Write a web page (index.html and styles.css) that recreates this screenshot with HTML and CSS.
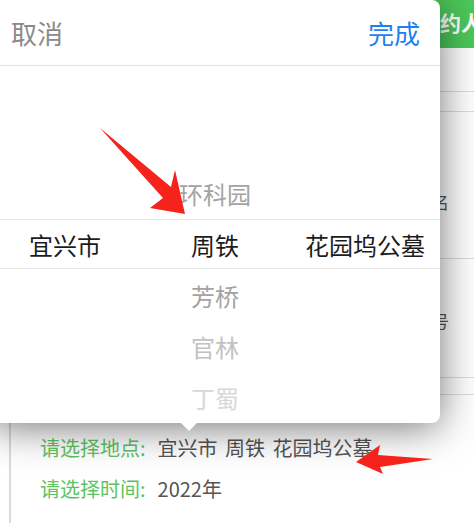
FILE: index.html
```html
<!DOCTYPE html>
<html lang="zh">

<head>
    <meta charset="UTF-8">
    <meta name="viewport" content="width=device-width, initial-scale=1.0">
    <title>选择地点</title>
    <link rel="stylesheet" href="styles.css">
</head>

<body>
    <div class="page">
        <div class="topbar">预约人员信息</div>
        <div class="row row-a"></div>
        <div class="row row-b"></div>
        <div class="row row-c"><span>姓名</span></div>
        <div class="row row-d"><span>手机号</span></div>
        <div class="row row-e"></div>

        <div class="card">
            <p class="field"><span class="label">请选择地点:</span><span class="value">宜兴市 周铁 花园坞公墓</span></p>
            <p class="field"><span class="label">请选择时间:</span><span class="value">2022年</span></p>
        </div>
    </div>

    <!-- picker popup -->
    <div class="popup">
        <div class="popup-head">
            <span class="cancel">取消</span>
            <span class="done">完成</span>
        </div>
        <div class="picker">
            <div class="col">
                <div class="item"></div>
                <div class="item"></div>
                <div class="item"></div>
                <div class="item selected">宜兴市</div>
                <div class="item"></div>
                <div class="item"></div>
                <div class="item"></div>
            </div>
            <div class="col">
                <div class="item"></div>
                <div class="item"></div>
                <div class="item near">环科园</div>
                <div class="item selected">周铁</div>
                <div class="item near">芳桥</div>
                <div class="item far">官林</div>
                <div class="item farther">丁蜀</div>
            </div>
            <div class="col">
                <div class="item"></div>
                <div class="item"></div>
                <div class="item"></div>
                <div class="item selected">花园坞公墓</div>
                <div class="item"></div>
                <div class="item"></div>
                <div class="item"></div>
            </div>
            <div class="picker-line"></div>
        </div>
        <div class="popup-tip"></div>
    </div>

    <!-- red annotation arrows -->
    <svg class="arrows" width="474" height="523" viewBox="0 0 474 523">
        <polygon points="100,128 171,187 175,170 185,214 150,208 163,198" fill="#f5231b" />
        <polygon points="433,459 378,455 380,445 356,462 383,474 380,467" fill="#f5231b" />
    </svg>
</body>

</html>
```

FILE: styles.css
```css
body {
    margin: 0;
    font-family: "Microsoft YaHei", "Noto Sans CJK SC", sans-serif;
    background-color: #fff;
    width: 474px;
    height: 523px;
    overflow: hidden;
    position: relative;
}

.page {
    background-color: #fff;
}

.topbar {
    height: 48px;
    line-height: 44px;
    background-color: #4cc85a;
    color: #fff;
    font-size: 21px;
    font-weight: bold;
    padding-left: 419px;
    white-space: nowrap;
    overflow: hidden;
}

.row {
    border-bottom: 1px solid #dcdcdc;
    font-size: 17px;
    color: #555;
    white-space: nowrap;
    overflow: hidden;
}

.row-a {
    height: 43px;
}

.row-b {
    height: 19px;
}

.row-c {
    padding-left: 415px;
    line-height: 20px;
    box-sizing: border-box;
    padding-top: 80px;
    height: 147px;
}

.row-d {
    height: 119px;
    padding-left: 398px;
    line-height: 20px;
    box-sizing: border-box;
    padding-top: 52px;
}

.row-e {
    height: 16px;
}

.card {
    margin-left: 9px;
    border-left: 2px solid #dadada;
    padding: 32px 0 0 29px;
    height: 120px;
}

.field {
    margin: 0;
    font-size: 20px;
    line-height: 41px;
    white-space: nowrap;
}

.label {
    color: #5cc361;
    margin-right: 12px;
}

.value {
    color: #555;
    word-spacing: 3px;
}

/* popup */
.popup {
    position: absolute;
    top: 0;
    left: -10px;
    width: 450px;
    background-color: #fff;
    border-radius: 0 8px 8px 0;
    box-shadow: 0 4px 40px rgba(0, 0, 0, 0.55);
}

.popup-head {
    height: 65px;
    border-bottom: 1px solid #e3e3e3;
    display: flex;
    justify-content: space-between;
    align-items: center;
    padding: 0 20px 0 21px;
    font-size: 26px;
}

.cancel {
    color: #8a8a8a;
}

.done {
    color: #1f7ff0;
}

.picker {
    position: relative;
    display: grid;
    grid-template-columns: 1fr 1fr 1fr;
}

.item {
    height: 51px;
    line-height: 51px;
    text-align: center;
    font-size: 24px;
    color: #999;
    white-space: nowrap;
}

.item.selected {
    color: #1c1c1c;
}

.item.near {
    color: #a3a3a3;
}

.item.far {
    color: #c2c2c2;
}

.item.farther {
    color: #d8d8d8;
}

.picker-line {
    position: absolute;
    left: 0;
    right: 0;
    top: 153px;
    height: 48px;
    border-top: 1px solid #e8e8e8;
    border-bottom: 1px solid #e8e8e8;
}

.popup-tip {
    position: absolute;
    left: 191px;
    bottom: -8px;
    width: 0;
    height: 0;
    border-left: 8px solid transparent;
    border-right: 8px solid transparent;
    border-top: 8px solid #fff;
}

.arrows {
    position: absolute;
    top: 0;
    left: 0;
}
```
